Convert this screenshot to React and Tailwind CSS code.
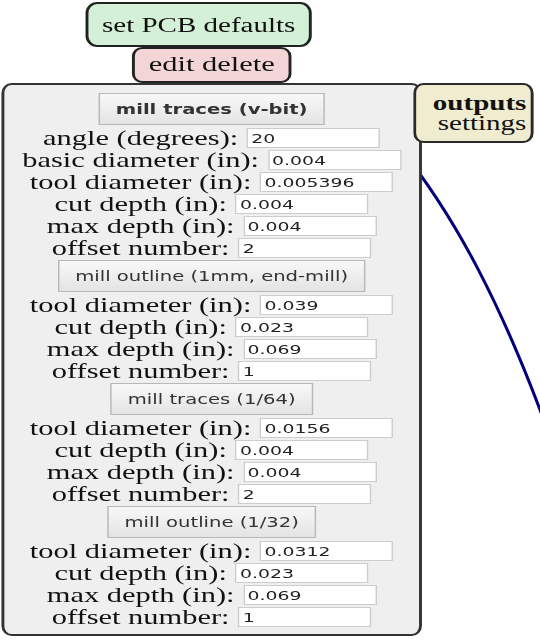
const sections = [
  {
    title: "mill traces (v-bit)",
    bold: true,
    rows: [
      ["angle (degrees):", "20"],
      ["basic diameter (in):", "0.004"],
      ["tool diameter (in):", "0.005396"],
      ["cut depth (in):", "0.004"],
      ["max depth (in):", "0.004"],
      ["offset number:", "2"],
    ],
  },
  {
    title: "mill outline (1mm, end-mill)",
    rows: [
      ["tool diameter (in):", "0.039"],
      ["cut depth (in):", "0.023"],
      ["max depth (in):", "0.069"],
      ["offset number:", "1"],
    ],
  },
  {
    title: "mill traces (1/64)",
    rows: [
      ["tool diameter (in):", "0.0156"],
      ["cut depth (in):", "0.004"],
      ["max depth (in):", "0.004"],
      ["offset number:", "2"],
    ],
  },
  {
    title: "mill outline (1/32)",
    rows: [
      ["tool diameter (in):", "0.0312"],
      ["cut depth (in):", "0.023"],
      ["max depth (in):", "0.069"],
      ["offset number:", "1"],
    ],
  },
];

function Field({ label, value }) {
  return (
    <div className="flex h-[22px] items-center justify-center gap-[6px]">
      <span className="text-[21px] leading-[22px] text-[#111]">{label}</span>
      <input
        readOnly
        value={value}
        className="h-[20px] w-[92px] border border-[#cdcdcd] bg-white pl-[2px] font-['DejaVu_Sans',sans-serif] text-[13px] text-[#222] outline-none"
      />
    </div>
  );
}

function Section({ title, bold, rows, first }) {
  return (
    <div className="flex flex-col items-center">
      <button
        className={`${first ? "" : "mt-[1px]"} mb-[2px] h-[32px] border border-[#b8b8b8] bg-gradient-to-b from-[#f8f8f8] to-[#e4e4e4] px-[11px] font-['DejaVu_Sans',sans-serif] text-[13.5px] text-[#333] ${bold ? "font-bold" : ""}`}
      >
        {title}
      </button>
      <div className="flex w-full flex-col">
        {rows.map(([label, value]) => (
          <Field key={label} label={label} value={value} />
        ))}
      </div>
    </div>
  );
}

export default function App() {
  return (
    <div className="relative h-[640px] w-[540px] overflow-hidden bg-white font-['Liberation_Serif',serif]">
      <svg className="absolute inset-0" width="540" height="640">
        <path
          d="M 400 148 C 450 210, 503 300, 560 465"
          fill="none"
          stroke="#00007a"
          strokeWidth="3"
        />
      </svg>

      <div className="relative z-10 w-[373px] origin-top-left scale-x-[1.45]">
        <div className="flex flex-col pt-[2px]">
          <div className="ml-[59px] flex h-[45px] w-[156px] items-center justify-center rounded-[8px_/_11px] border-2 border-[#222] bg-[#d4f0d6] text-[20px] text-[#111]">
            set PCB defaults
          </div>
          <div className="ml-[91px] flex h-[36px] w-[110px] items-center justify-center rounded-[7px_/_9px] border-2 border-[#222] bg-[#f3d5d5] text-[21px] text-[#111]">
            edit delete
          </div>
        </div>

        <div className="flex items-start">
          <div className="ml-[1px] w-[290px] rounded-[7px_/_10px] border-2 border-[#333] bg-[#efefef] pb-[6px] pt-[8px]">
            {sections.map((s, i) => (
              <Section key={s.title} {...s} first={i === 0} />
            ))}
          </div>
          <div className="relative -ml-[6px] flex h-[60px] w-[83px] flex-col items-end justify-center rounded-[7px_/_10px] border-2 border-[#2a2a2a] bg-[#efecd0] pr-[3px] text-[20px] leading-[20px] text-[#111]">
            <span className="font-bold">outputs</span>
            <span>settings</span>
          </div>
        </div>
      </div>
    </div>
  );
}
